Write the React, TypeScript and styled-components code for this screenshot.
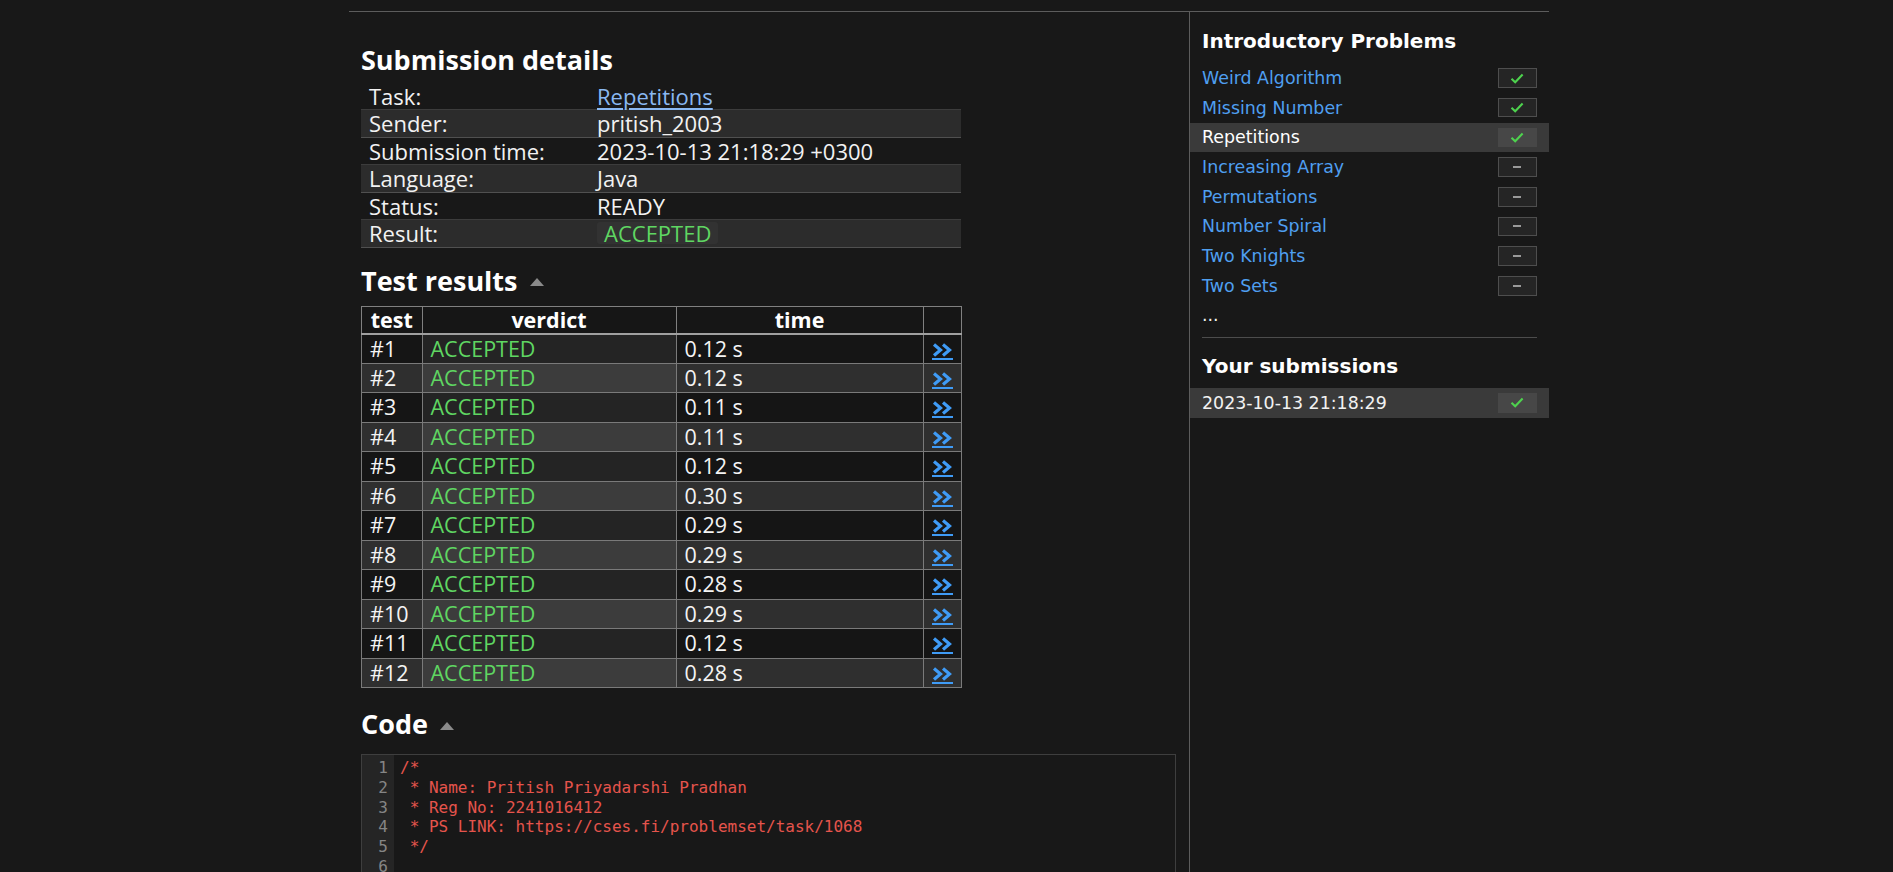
import React from "react";
import styled, { createGlobalStyle } from "styled-components";

const GlobalStyle = createGlobalStyle`
  html, body { margin: 0; padding: 0; background: #181818; }
  body {
    color: #f2f2f2;
    font-family: "Open Sans", "Noto Sans", sans-serif;
  }
  * { box-sizing: border-box; }
`;

const Frame = styled.div`
  width: 1200px;
  margin-left: calc(50vw - 597.5px);
  padding-top: 11px;
`;

const Columns = styled.div`
  display: grid;
  grid-template-columns: 841px 359px;
  border-top: 1px solid #5c5c5c;
`;

const Main = styled.main`
  border-right: 1px solid #5c5c5c;
  padding: 0 13px 0 12px;
  min-height: 900px;
`;

const Heading = styled.h2<{ $top: number; $bottom: number }>`
  margin: ${(p) => p.$top}px 0 ${(p) => p.$bottom}px;
  font-size: 27px;
  line-height: 28px;
  font-weight: 700;
  color: #ffffff;
  display: flex;
  align-items: center;
  gap: 12px;
`;

const Caret = styled.svg`
  width: 14px;
  height: 8px;
  margin-top: 3px;
`;

const DetailsTable = styled.table`
  width: 600px;
  border-collapse: collapse;
  font-size: 22px;
`;

const DetailRow = styled.tr<{ $alt: boolean }>`
  background: ${(p) => (p.$alt ? "#2c2c2c" : "transparent")};
  border-bottom: 1px solid ${(p) => (p.$alt ? "#505050" : "#3c3c3c")};
`;

const DetailCell = styled.td<{ $label?: boolean }>`
  height: 27.5px;
  padding: 0 8px;
  line-height: 24px;
  width: ${(p) => (p.$label ? "228px" : "auto")};
  color: #f2f2f2;
  white-space: nowrap;
`;

const TaskLink = styled.a`
  color: #8ab8f2;
  text-decoration: underline;
  text-underline-offset: 3px;
`;

const Badge = styled.span`
  display: inline-block;
  background: #323232;
  border-radius: 3px;
  padding: 0 7px;
  line-height: 22px;
  color: #5fd662;
`;

const TestTable = styled.table`
  width: 600px;
  border-collapse: collapse;
  border: 1px solid #808080;
  font-size: 21.5px;
  line-height: 24px;
  table-layout: fixed;
`;

const HeadCell = styled.th<{ $w: number }>`
  width: ${(p) => p.$w}px;
  height: 27px;
  padding: 0;
  border: 1px solid #808080;
  border-bottom: 2px solid #a0a0a0;
  background: #161616;
  font-weight: 700;
  text-align: center;
  color: #ffffff;
`;

const TestRow = styled.tr<{ $alt: boolean }>`
  background: ${(p) => (p.$alt ? "#2f2f2f" : "#151515")};
`;

const TestCell = styled.td<{ $verdict?: boolean; $green?: boolean }>`
  height: 29.5px;
  padding: 0 8px;
  border: 1px solid #7a7a7a;
  white-space: nowrap;
  color: ${(p) => (p.$green ? "#5fd662" : "#f4f4f4")};
  background: ${(p) => (p.$verdict ? "rgba(255,255,255,0.065)" : "transparent")};
`;

const LinkCell = styled.td`
  height: 29.5px;
  padding: 8px 0 0;
  border: 1px solid #7a7a7a;
  text-align: center;
  vertical-align: top;
  font-size: 0;
  line-height: 0;
`;

const DetailLink = styled.a`
  display: inline-block;
  border-bottom: 2px solid #3f9bf6;
  padding-bottom: 1px;
  line-height: 0;
`;

const CodeBox = styled.div`
  display: grid;
  grid-template-columns: 32px 1fr;
  border: 1px solid #3e3e3e;
  background: #181818;
  font-family: "DejaVu Sans Mono", "Liberation Mono", monospace;
  font-size: 16px;
  line-height: 19.8px;
`;

const Gutter = styled.div`
  background: #252525;
  padding: 3px 6px 0 0;
  text-align: right;
  color: #858585;
`;

const CodeText = styled.pre`
  margin: 0;
  padding: 3px 0 0 6px;
  font: inherit;
  color: #e5544c;
  white-space: pre;
`;

const Sidebar = styled.aside`
  padding-top: 15.7px;
  font-family: "DejaVu Sans", Verdana, sans-serif;
`;

const SideTitle = styled.h3<{ $top: number }>`
  margin: ${(p) => p.$top}px 12px 9.5px;
  font-size: 20px;
  line-height: 26px;
  font-weight: 700;
  color: #ffffff;
`;

const SideRow = styled.div<{ $active?: boolean }>`
  display: flex;
  align-items: center;
  justify-content: space-between;
  height: 29.7px;
  padding: 0 12px;
  font-size: 17.4px;
  background: ${(p) => (p.$active ? "#3a3a3a" : "transparent")};
`;

const SideLink = styled.a<{ $active?: boolean }>`
  color: ${(p) => (p.$active ? "#ffffff" : "#4f9ff0")};
  text-decoration: none;
`;

const Plain = styled.span`
  color: #f2f2f2;
`;

const StatusBox = styled.span<{ $active?: boolean }>`
  width: 39.5px;
  height: 19.5px;
  display: flex;
  align-items: center;
  justify-content: center;
  background: ${(p) => (p.$active ? "#474747" : "#252525")};
  border: 1px solid ${(p) => (p.$active ? "#474747" : "#4e4e4e")};
`;

const Dash = styled.span`
  width: 8px;
  height: 2px;
  background: #9a9a9a;
`;

const Ellipsis = styled.div`
  height: 29.7px;
  padding: 0 12px;
  font-size: 17.4px;
  line-height: 29.7px;
  color: #f2f2f2;
`;

const Rule = styled.hr`
  margin: 6.5px 12px 0;
  border: 0;
  border-top: 1px solid #4c4c4c;
`;

const CaretIcon = () => (
  <Caret viewBox="0 0 14 8">
    <path d="M7 0 L14 8 L0 8 Z" fill="#8a8a8a" />
  </Caret>
);

const Check = () => (
  <svg width="14" height="11" viewBox="0 0 14 11">
    <path d="M1.5 5.8 L5.2 9.2 L12.6 1.6" fill="none" stroke="#4ed24e" strokeWidth="2.1" />
  </svg>
);

const Chevrons = () => (
  <svg width="21" height="14" viewBox="0 0 21 14">
    <path d="M2 1.5 L8.5 7 L2 12.5" fill="none" stroke="#3f9bf6" strokeWidth="3.2" />
    <path d="M11 1.5 L17.5 7 L11 12.5" fill="none" stroke="#3f9bf6" strokeWidth="3.2" />
  </svg>
);

const details: { label: string; value: React.ReactNode }[] = [
  { label: "Task:", value: <TaskLink href="#">Repetitions</TaskLink> },
  { label: "Sender:", value: "pritish_2003" },
  { label: "Submission time:", value: "2023-10-13 21:18:29 +0300" },
  { label: "Language:", value: "Java" },
  { label: "Status:", value: "READY" },
  { label: "Result:", value: <Badge>ACCEPTED</Badge> },
];

const times = ["0.12", "0.12", "0.11", "0.11", "0.12", "0.30", "0.29", "0.29", "0.28", "0.29", "0.12", "0.28"];

const code = [
  "/*",
  " * Name: Pritish Priyadarshi Pradhan",
  " * Reg No: 2241016412",
  " * PS LINK: https://cses.fi/problemset/task/1068",
  " */",
  "",
  "import java.util.*;",
  "import java.io.*;",
  "",
];

const problems: { name: string; done: boolean; active?: boolean }[] = [
  { name: "Weird Algorithm", done: true },
  { name: "Missing Number", done: true },
  { name: "Repetitions", done: true, active: true },
  { name: "Increasing Array", done: false },
  { name: "Permutations", done: false },
  { name: "Number Spiral", done: false },
  { name: "Two Knights", done: false },
  { name: "Two Sets", done: false },
];

export default function App() {
  return (
    <>
      <GlobalStyle />
      <Frame>
        <Columns>
          <Main>
            <Heading $top={34} $bottom={8}>Submission details</Heading>
            <DetailsTable>
              <tbody>
                {details.map((d, i) => (
                  <DetailRow key={d.label} $alt={i % 2 === 1}>
                    <DetailCell $label>{d.label}</DetailCell>
                    <DetailCell>{d.value}</DetailCell>
                  </DetailRow>
                ))}
              </tbody>
            </DetailsTable>

            <Heading $top={19} $bottom={11.5}>
              Test results <CaretIcon />
            </Heading>
            <TestTable>
              <thead>
                <tr>
                  <HeadCell $w={60.5}>test</HeadCell>
                  <HeadCell $w={254}>verdict</HeadCell>
                  <HeadCell $w={247}>time</HeadCell>
                  <HeadCell $w={38.5}></HeadCell>
                </tr>
              </thead>
              <tbody>
                {times.map((t, i) => (
                  <TestRow key={i} $alt={i % 2 === 1}>
                    <TestCell>#{i + 1}</TestCell>
                    <TestCell $verdict $green>ACCEPTED</TestCell>
                    <TestCell>{t} s</TestCell>
                    <LinkCell>
                      <DetailLink href="#">
                        <Chevrons />
                      </DetailLink>
                    </LinkCell>
                  </TestRow>
                ))}
              </tbody>
            </TestTable>

            <Heading $top={22} $bottom={16}>
              Code <CaretIcon />
            </Heading>
            <CodeBox>
              <Gutter>
                {code.map((_, i) => (
                  <div key={i}>{i + 1}</div>
                ))}
              </Gutter>
              <CodeText>{code.join("\n")}</CodeText>
            </CodeBox>
          </Main>

          <Sidebar>
            <SideTitle $top={0}>Introductory Problems</SideTitle>
            {problems.map((p) => (
              <SideRow key={p.name} $active={p.active}>
                <SideLink href="#" $active={p.active}>{p.name}</SideLink>
                <StatusBox $active={p.active}>{p.done ? <Check /> : <Dash />}</StatusBox>
              </SideRow>
            ))}
            <Ellipsis>...</Ellipsis>
            <Rule />
            <SideTitle $top={14.7}>Your submissions</SideTitle>
            <SideRow $active>
              <Plain>2023-10-13 21:18:29</Plain>
              <StatusBox $active>
                <Check />
              </StatusBox>
            </SideRow>
          </Sidebar>
        </Columns>
      </Frame>
    </>
  );
}
